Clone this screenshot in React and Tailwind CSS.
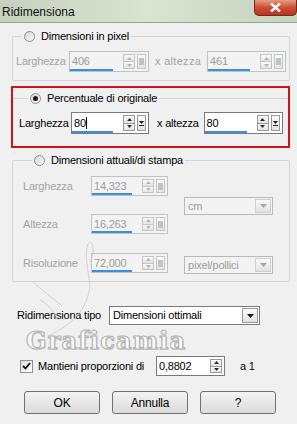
const Radio = ({ checked }) => (
  <span className="w-[11px] h-[11px] rounded-full border border-[#8e8f8f] bg-linear-to-br from-[#d4d4d4] to-[#fbfbfb] flex items-center justify-center shrink-0">
    {checked && <span className="w-[5px] h-[5px] rounded-full bg-[#1a1a1a]" />}
  </span>
);

const Tri = ({ up, color }) => (
  <svg width="5" height="3" viewBox="0 0 5 3">
    <path d={up ? 'M0 3 L2.5 0 L5 3 Z' : 'M0 0 L2.5 3 L5 0 Z'} fill={color} />
  </svg>
);

const Spinner = ({ disabled }) => {
  const c = disabled ? '#b4b4b4' : '#2a2a2a';
  const b = disabled ? 'border-[#c4c4c4]' : 'border-[#9a9a9a]';
  return (
    <div className="flex flex-col w-[12px] shrink-0">
      <div className={`flex-1 flex items-center justify-center border ${b} bg-linear-to-b from-[#fafafa] to-[#e4e4e4]`}>
        <Tri up color={c} />
      </div>
      <div className={`flex-1 flex items-center justify-center border border-t-0 ${b} bg-linear-to-b from-[#fafafa] to-[#e4e4e4]`}>
        <Tri color={c} />
      </div>
    </div>
  );
};

const Bar = ({ disabled }) => (
  <div className={`w-[9px] shrink-0 flex items-center justify-center border ${disabled ? 'border-[#c4c4c4]' : 'border-[#9a9a9a]'} bg-linear-to-b from-[#fafafa] to-[#e4e4e4]`}>
    {disabled ? (
      <span className="w-[5px] h-[7px] bg-[#c2c2c2]" />
    ) : (
      <svg width="5" height="7" viewBox="0 0 5 7">
        <path d="M0 1 L2.5 4 L5 1 Z" fill="#1e1e1e" />
        <rect x="0" y="5" width="5" height="1" fill="#1e1e1e" />
      </svg>
    )}
  </div>
);

const NumField = ({ value, disabled, width, bar = true, h = 'h-[21px]' }) => (
  <div
    className={`flex ${h} ${width} border py-[2px] pr-[2px] gap-[2px] ${
      disabled ? 'border-[#bcc4cb] bg-[#f3f3f3] text-[#9c9c9c]' : 'border-[#7a7a7a] bg-white text-black'
    }`}
  >
    <div className="relative flex-1 flex items-center pl-[2px] -my-[2px] leading-none">
      {value}
      {bar && <span className="absolute left-0 right-[8px] bottom-0 h-[2px] bg-[#3b8fe2]" />}
    </div>
    <Spinner disabled={disabled} />
    {bar && <Bar disabled={disabled} />}
  </div>
);

const Dropdown = ({ text, disabled, width, h }) => (
  <div
    className={`flex ${width} ${h} border ${
      disabled ? 'border-[#b9b9b9] bg-[#f3f3f3] text-[#9c9c9c]' : 'border-[#7a7a7a] bg-white text-black'
    }`}
  >
    <div className="flex-1 flex items-center pl-[3px]">{text}</div>
    <div
      className={`w-[16px] m-[1px] flex items-center justify-center border ${
        disabled ? 'border-[#cfcfcf]' : 'border-[#9a9a9a]'
      } bg-linear-to-b from-[#fafafa] to-[#e2e2e2]`}
    >
      <svg width="7" height="4" viewBox="0 0 7 4">
        <path d="M0 0 L3.5 4 L7 0 Z" fill={disabled ? '#a8a8a8' : '#1a1a1a'} />
      </svg>
    </div>
  </div>
);

const Button = ({ children }) => (
  <button className="w-[76px] h-[23px] rounded-[3px] border border-[#707070] bg-linear-to-b from-[#f2f2f2] to-[#dcdcdc] text-[12px] text-black flex items-center justify-center">
    {children}
  </button>
);

export default function App() {
  return (
    <div className="relative w-[297px] h-[424px] overflow-hidden bg-[#f0f0f0] font-['Liberation_Sans',Arial,sans-serif] text-[11px] tracking-[-0.2px] text-black">
      {/* Title bar */}
      <div className="h-[22px] flex items-start justify-between bg-linear-to-r from-[#c4d2bd] via-[#dbe3d3] to-[#c6d3c0]">
        <span className="pl-[2px] pt-[3px] text-[12px] tracking-normal text-[#111]">Ridimensiona</span>
        <div className="w-[43px] h-[16px] rounded-b-[5px] border border-t-0 border-[#6e2a1e] bg-linear-to-b from-[#e49a84] via-[#cf4d34] to-[#b6351f] flex items-center justify-center">
          <svg width="11" height="9" viewBox="0 0 11 9">
            <path d="M1 0.5 L10 8.5 M10 0.5 L1 8.5" stroke="#fff" strokeWidth="2.4" />
          </svg>
        </div>
      </div>

      <div className="border-t border-[#9aa198]">
        {/* Dimensioni in pixel */}
        <fieldset className="mt-[6px] ml-[12px] mr-[7px] border border-[#d0d6da] rounded-[2px] pl-[3px] pb-[8px]">
          <legend className="ml-[6px] px-[2px] flex items-center gap-[6px] leading-[14px]">
            <Radio />
            <span>Dimensioni in pixel</span>
          </legend>
          <div className="mt-[8px] flex items-center text-[#a3a3a3]">
            <span className="w-[53px]">Larghezza</span>
            <NumField value="406" disabled width="w-[80px]" />
            <span className="ml-[6px] mr-[6px] tracking-[0.3px]">x&nbsp;altezza</span>
            <NumField value="461" disabled width="w-[79px]" />
          </div>
        </fieldset>

        {/* Percentuale di originale */}
        <div className="mt-[5px] ml-[11px] mr-[7px] border-2 border-[#d0121b]">
          <fieldset className="mt-[3px] border-0 border-t border-[#d0d6da] pl-[6px] pb-[12px]">
            <legend className="ml-[9px] px-[2px] flex items-center gap-[6px] leading-[14px]">
              <Radio checked />
              <span>Percentuale di originale</span>
            </legend>
            <div className="mt-[7px] flex items-center">
              <span className="w-[52px]">Larghezza</span>
              <NumField value={<>80<span className="w-px h-[12px] bg-black" /></>} width="w-[78px]" h="h-[22px]" />
              <span className="ml-[8px] mr-[5px]">x altezza</span>
              <NumField value="80" width="w-[79px]" h="h-[22px]" />
            </div>
          </fieldset>
        </div>

        {/* Dimensioni attuali/di stampa */}
        <fieldset className="mt-[5px] ml-[12px] mr-[7px] border border-[#d0d6da] rounded-[2px] pl-[10px] pb-[7px]">
          <legend className="ml-[9px] px-[2px] flex items-center gap-[6px] leading-[14px]">
            <Radio />
            <span>Dimensioni attuali/di stampa</span>
          </legend>
          <div className="mt-[9px] flex text-[#a3a3a3]">
            <div className="flex flex-col">
              <div className="flex items-center">
                <span className="w-[68px]">Larghezza</span>
                <NumField value="14,323" disabled width="w-[77px]" h="h-[20px]" />
              </div>
              <div className="mt-[18px] flex items-center">
                <span className="w-[68px]">Altezza</span>
                <NumField value="16,263" disabled width="w-[77px]" h="h-[20px]" />
              </div>
              <div className="mt-[19px] flex items-center">
                <span className="w-[68px]">Risoluzione</span>
                <NumField value="72,000" disabled width="w-[77px]" h="h-[20px]" />
              </div>
            </div>
            <div className="ml-[16px] flex flex-col">
              <div className="mt-[21px]">
                <Dropdown text="cm" disabled width="w-[89px]" h="h-[18px]" />
              </div>
              <div className="mt-[41px]">
                <Dropdown text="pixel/pollici" disabled width="w-[89px]" h="h-[18px]" />
              </div>
            </div>
          </div>
        </fieldset>

        {/* Ridimensiona tipo */}
        <div className="mt-[24px] pl-[17px] flex items-center">
          <span className="w-[92px]">Ridimensiona tipo</span>
          <Dropdown text="Dimensioni ottimali" width="w-[151px]" h="h-[19px]" />
        </div>

        {/* Watermark */}
        <div className="h-[31px] pl-[26px] flex items-center">
          <span className="font-['DejaVu_Serif',serif] font-bold text-[24px] tracking-[1.2px] text-[#fbfbfb] [-webkit-text-stroke:1.2px_#b4b4b4] [text-shadow:1px_1px_0_#d8d8d8]">
            Graficamia
          </span>
        </div>

        {/* Mantieni proporzioni */}
        <div className="pl-[20px] flex items-center h-[20px]">
          <span className="w-[13px] h-[13px] border border-[#8e8f8f] bg-linear-to-br from-[#dcdcdc] to-white flex items-center justify-center">
            <svg width="9" height="8" viewBox="0 0 9 8">
              <path d="M1 4 L3.5 6.5 L8 1" stroke="#111" strokeWidth="1.8" fill="none" />
            </svg>
          </span>
          <span className="ml-[5px] w-[118px]">Mantieni proporzioni di</span>
          <NumField value="0,8802" width="w-[69px]" bar={false} h="h-[20px]" />
          <span className="ml-[15px]">a 1</span>
        </div>

        {/* Buttons */}
        <div className="mt-[15px] pl-[24px] flex gap-[12px]">
          <Button>OK</Button>
          <Button>Annulla</Button>
          <Button>?</Button>
        </div>
      </div>

      {/* watermark drawing */}
      <svg className="absolute left-0 top-0 pointer-events-none" width="297" height="424" viewBox="0 0 297 424">
        <g stroke="#c9c9c9" strokeWidth="1" fill="none" opacity="0.8">
          <path d="M90 285 C 88 270, 84 252, 88 244 C 92 238, 96 250, 90 262" />
          <path d="M90 285 C 88 305, 78 322, 48 336" />
          <path d="M33 282 C 42 290, 50 296, 62 306 M40 300 C 48 304, 54 312, 58 320" />
        </g>
      </svg>
    </div>
  );
}
